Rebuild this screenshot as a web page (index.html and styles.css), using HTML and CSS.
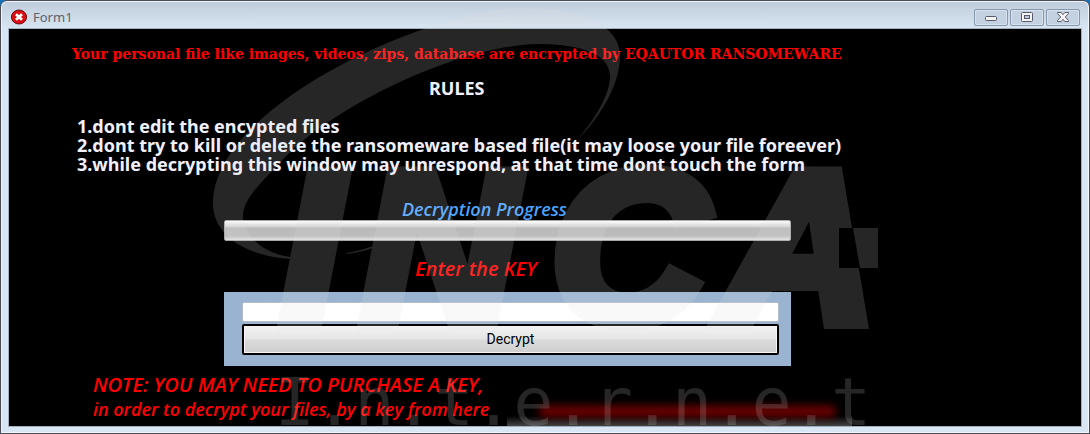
FILE: index.html
```html
<!DOCTYPE html>
<html lang="en">
<head>
<meta charset="utf-8">
<title>Form1</title>
<link rel="stylesheet" href="styles.css">
</head>
<body>
<div class="window">
  <header class="titlebar">
    <svg class="app-icon" width="16" height="16" viewBox="0 0 16 16" aria-hidden="true">
      <ellipse cx="8" cy="8" rx="7.6" ry="7" fill="#d90d12" stroke="#6d1014"/>
      <path d="M5 5.2l6 5.6M11 5.2l-6 5.6" stroke="#fff" stroke-width="2.8"/>
    </svg>
    <h1 class="window-title">Form1</h1>
    <div class="controls">
      <button class="control" type="button" aria-label="Minimize">
        <svg width="16" height="12" viewBox="0 0 16 12"><rect x="2.5" y="5.5" width="11" height="4" rx="1" fill="#f4f4f4" stroke="#565b6c"/></svg>
      </button>
      <button class="control" type="button" aria-label="Maximize">
        <svg width="16" height="12" viewBox="0 0 16 12"><rect x="2.5" y="1.5" width="11" height="9" rx="1" fill="#f4f4f4" stroke="#565b6c"/><rect x="5.5" y="4.5" width="5" height="3" fill="#b9c8d9" stroke="#565b6c"/></svg>
      </button>
      <button class="control" type="button" aria-label="Close">
        <svg width="16" height="12" viewBox="0 0 16 12"><path d="M2.5 1.5h3.6L8 3.7l1.9-2.2h3.6v1L10.3 6l3.2 3.5v1H9.9L8 8.3l-1.9 2.2H2.5v-1L5.7 6 2.5 2.5z" fill="#f4f4f4" stroke="#565b6c"/></svg>
      </button>
    </div>
  </header>
  <main class="client">
    <p class="headline">Your personal file like images, videos, zips, database are encrypted by EQAUTOR RANSOMEWARE</p>
    <h2 class="rules-title">RULES</h2>
    <div class="rules">
      <p>1.dont edit the encypted files</p>
      <p>2.dont try to kill or delete the ransomeware based file(it may loose your file foreever)</p>
      <p>3.while decrypting this window may unrespond, at that time dont touch the form</p>
    </div>
    <form class="key-form">
      <label class="script progress-label" for="progress">Decryption Progress</label>
      <progress class="progress" id="progress" value="0" max="100"></progress>
      <label class="script large key-label" for="key">Enter the KEY</label>
      <div class="panel">
        <input class="key-input" id="key" type="text">
        <button class="decrypt" type="button">Decrypt</button>
      </div>
    </form>
    <div class="note">
      <p class="script large">NOTE: YOU MAY NEED TO PURCHASE A KEY,</p>
      <div class="note-row">
        <p class="script where">in order to decrypt your files, by a key from here</p>
        <div class="redacted"><span class="smear"></span></div>
      </div>
    </div>
  </main>
  <svg class="watermark" width="1090" height="434" viewBox="0 0 1090 434" aria-hidden="true">
    <defs>
      <mask id="notch" maskUnits="userSpaceOnUse" x="0" y="0" width="1090" height="434">
        <rect width="1090" height="434" fill="#fff"/>
        <rect x="839" y="228" width="39" height="40" fill="#000"/>
      </mask>
    </defs>
    <g class="mark">
      <path d="M293 259C255 258 212 240 213 202C215 125 345 55 427 28C460 17 490 8 517 8C570 7 620 20 620 56C620 86 598 120 577 140C596 118 610 94 610 76C610 50 570 44 537 44C455 46 325 110 278 165C260 184 242 200 243 218C246 242 272 256 293 257Z"/>
      <path d="M347 253Q367 249 381 243L380 246Q366 251 347 254Z"/>
      <g class="brand" mask="url(#notch)">
        <text x="281" y="322">I</text>
        <text x="361" y="322">N</text>
        <text x="551" y="322">C</text>
        <text x="721" y="322">A</text>
      </g>
      <path d="M853 228H878V268H860Z"/>
    </g>
    <text class="tagline" x="275" y="425">I.n.t.e.r.n.e.t</text>
  </svg>
</div>
</body>
</html>
```
FILE: styles.css
```css
* { box-sizing: border-box; }
body { margin: 0; background: #1672b8; font-family: "Noto Sans", sans-serif; }
h1, h2, p { margin: 0; }

.window {
  position: relative;
  display: flex;
  flex-direction: column;
  min-height: 100vh;
  padding: 0 7px 6px;
  border: 1px solid #4c4c55;
  border-radius: 7px 7px 0 0;
  background: linear-gradient(#bfccdb, #d8e5f2 28px);
  box-shadow: inset 0 0 0 1px #eef5fb;
  overflow: hidden;
}
.titlebar { display: flex; align-items: center; height: 27px; padding: 5px 2px 0 3px; }
.app-icon { margin-right: 6px; }
.window-title { font-size: 13px; font-weight: 400; line-height: 20px; color: #5c626c; }
.controls { display: flex; gap: 2px; margin-left: auto; }
.control {
  display: flex;
  align-items: center;
  justify-content: center;
  width: 34px;
  height: 17px;
  padding: 0;
  border: 1px solid #8797ad;
  border-radius: 2px;
  background: #c4d1e0;
  box-shadow: inset 0 0 0 1px #d7e2ee;
}

.client {
  flex: 1;
  padding: 15px 0 0 63px;
  border: 1px solid #9fb0bf;
  background: #000;
}
.headline { font: 700 14px/20px "DejaVu Serif", serif; color: #f00; }
.rules-title { margin-top: 14px; padding-left: 357px; font-size: 18px; font-weight: 700; line-height: 20px; color: #f0f0ff; }
.rules { margin-top: 19px; padding-left: 5px; font-size: 18px; font-weight: 700; line-height: 19px; color: #f0f0ff; }
.script { font: italic 600 18px/24px "Open Sans", sans-serif; color: #f00; }
.large { font-size: 20px; }

.key-form { display: flex; flex-direction: column; width: 567px; margin: 25px 0 0 152px; }
.key-form .script { line-height: 20px; }
.key-form .progress-label { padding-left: 178px; color: #4ba3ff; }
.key-label { margin-top: 18px; padding-left: 191px; }
.progress {
  appearance: none;
  width: 100%;
  height: 21px;
  margin-top: 1px;
  border: 1px solid #a5a5a5;
  border-radius: 2px;
  background: linear-gradient(#fff, #d0d0d0 6px, #bababa 7px, #bcbcbc 15px, #e4e4e4);
}
.progress::-webkit-progress-bar { background: transparent; }
.panel { display: flex; flex-direction: column; gap: 2px; margin-top: 13px; padding: 10px 12px 11px 18px; background: #99b3d1; }
.key-input { height: 20px; padding: 0 4px; border: 1px solid #b4bcc8; border-radius: 2px; background: #fff; font-size: 13px; }
.decrypt {
  height: 31px;
  padding: 0 0 2px;
  border: 2px solid #000;
  border-radius: 2px;
  background: linear-gradient(#f2f2f2, #e5e5e5 48%, #dadada 52%, #cecece);
  box-shadow: inset 0 0 0 1px #f6f6f6;
  font: 14px Roboto, sans-serif;
  color: #000;
}

.note { margin-top: 7px; padding-left: 21px; }
.note-row { display: flex; align-items: flex-start; }
.where { min-width: 414px; }
.redacted { width: 345px; height: 29px; padding: 9px 16px 0 32px; background: linear-gradient(#000 65%, #444); }
.smear { display: block; height: 11px; border-radius: 5px; background: #730000; filter: blur(4px); }

.watermark { position: absolute; top: -1px; left: -1px; pointer-events: none; }
.mark { fill: #e1e1e1; stroke: none; opacity: 0.17; }
.brand { font: italic 700 215px "Liberation Sans", sans-serif; stroke: #e1e1e1; stroke-width: 14px; }
.tagline { font: 66px "DejaVu Sans Mono", monospace; fill: #e1e1e1; opacity: 0.17; }
```
